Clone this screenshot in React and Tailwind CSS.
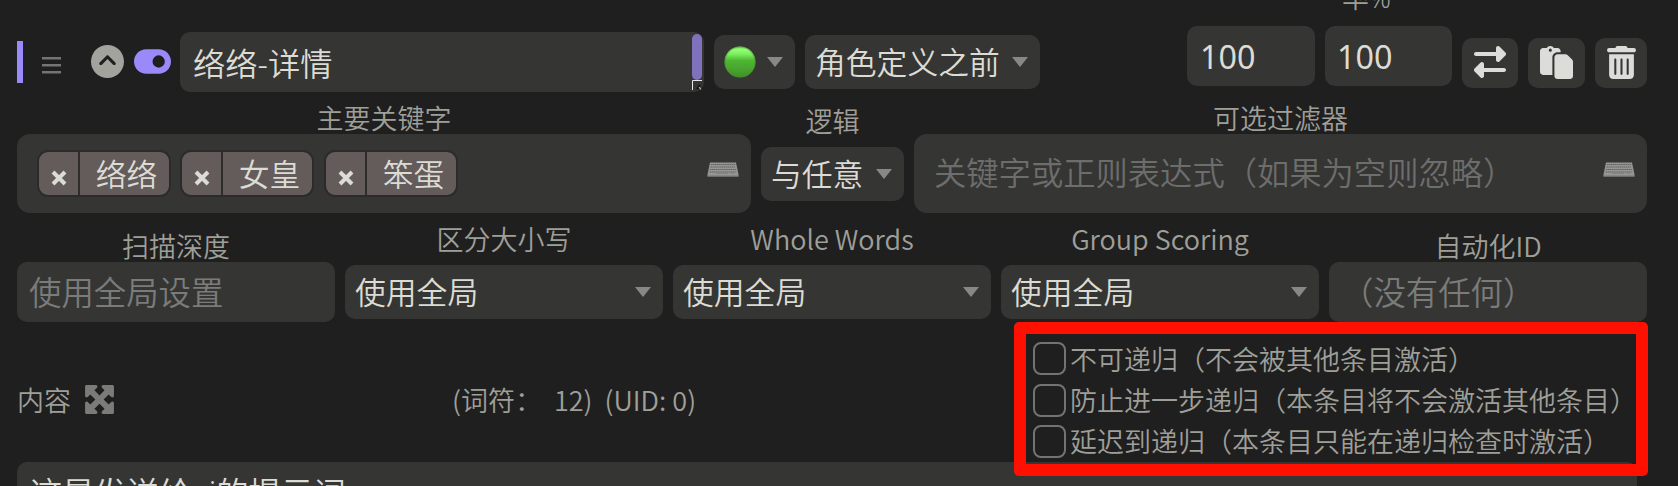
import {
  FaCircleChevronUp,
  FaToggleOn,
  FaRightLeft,
  FaPaste,
  FaTrashCan,
  FaMaximize,
} from "react-icons/fa6";

function Caret() {
  return (
    <svg viewBox="0 0 16 10" className="h-[10px] w-[16px] shrink-0">
      <path d="M0 0H16L8 10Z" fill="#888887" />
    </svg>
  );
}

function Keyboard() {
  return (
    <svg viewBox="0 0 32 15" className="h-[15px] w-[32px] shrink-0">
      <path d="M3 0.5H29L31.5 12.5V14.5H0.5V12.5Z" fill="#969695" />
      <path
        d="M4 2.5H28M3.6 5H28.4M3 7.5H29M2.6 10H29.4"
        stroke="#626261"
        strokeWidth="1.1"
        strokeDasharray="1.4 0.5"
      />
      <path d="M9 11.5H21M24 11.5H27" stroke="#858584" strokeWidth="1" />
      <path d="M0.5 14H31.5" stroke="#777" strokeWidth="1" />
    </svg>
  );
}

function GreenBall() {
  return (
    <svg viewBox="0 0 32 32" className="h-[32px] w-[32px] shrink-0">
      <defs>
        <linearGradient id="ball" x1="0" y1="0" x2="0" y2="1">
          <stop offset="0" stopColor="#6fd755" />
          <stop offset="0.1" stopColor="#93ff78" />
          <stop offset="0.25" stopColor="#7bee5e" />
          <stop offset="0.45" stopColor="#4fb733" />
          <stop offset="0.75" stopColor="#48a22e" />
          <stop offset="1" stopColor="#3f8f28" />
        </linearGradient>
      </defs>
      <circle cx="16" cy="16" r="15.5" fill="url(#ball)" />
      <circle cx="16" cy="16" r="15" fill="none" stroke="#3f8f28" strokeOpacity="0.5" />
    </svg>
  );
}

function Select({ text, className }) {
  return (
    <div
      className={`flex h-[54px] items-center justify-between rounded-[10px] bg-[#353534] pr-[12px] pl-[10px] text-[30.8px] leading-none text-[#dcdcd5] ${className}`}
    >
      <span className="whitespace-nowrap">{text}</span>
      <Caret />
    </div>
  );
}

function Token({ text, className }) {
  return (
    <div
      className={`flex h-[47px] w-[134px] shrink-0 overflow-hidden rounded-[11px] border-2 border-[#2c2b2a] bg-[#645b5b] text-[#dcdcd5] ${className}`}
    >
      <div className="flex w-[41px] items-center justify-center border-r-2 border-[#2f2d2c] pt-[9px]">
        <svg viewBox="0 0 16 16" className="h-[16px] w-[16px]">
          <path d="M2 2L14 14M14 2L2 14" stroke="#dcdcd5" strokeWidth="4" />
        </svg>
      </div>
      <div className="flex flex-1 items-center justify-center pt-[1px] pl-[4px] text-[30.8px] leading-none whitespace-nowrap">
        {text}
      </div>
    </div>
  );
}

function Field({ label, children, low }) {
  return (
    <div className="flex w-[318px] flex-col items-center">
      <div
        className={`flex items-end font-['Noto_Sans_CJK_SC',sans-serif] text-[27px] leading-[32px] whitespace-nowrap text-[#9f9f99] ${low ? "h-[49px]" : "h-[42px]"}`}
      >
        {label}
      </div>
      {children}
    </div>
  );
}

function Check({ text }) {
  return (
    <label className="flex h-[41.4px] items-center gap-[4px]">
      <span className="h-[33px] w-[33px] shrink-0 rounded-[8px] border-2 border-[#737372]" />
      <span className="pt-[2px] text-[27px] leading-[32px] whitespace-nowrap text-[#9f9f99]">{text}</span>
    </label>
  );
}

function HeaderRow() {
  return (
    <div className="flex h-[66px] shrink-0 items-start">
      <div className="mt-[15px] h-[42px] w-[6px] bg-[#9a89f9]" />
      <svg viewBox="0 0 19 17" className="mt-[31px] ml-[19px] h-[17px] w-[19px]">
        <path d="M0 1.2H19M0 8.2H19M0 15.2H19" stroke="#747473" strokeWidth="2.4" />
      </svg>
      <FaCircleChevronUp className="mt-[19px] ml-[30px] h-[33px] w-[33px] text-[#a3a39e]" />
      <FaToggleOn className="mt-[19px] ml-[10px] h-[33px] w-[37px] text-[#9a89f9]" />
      <div className="mt-[6px] ml-[9px] flex h-[60px] w-[524px] items-start justify-between rounded-[10px] bg-[#353534] pr-[2px] pl-[13px]">
        <span className="pt-[9px] text-[32.3px] leading-[44px] text-[#dcdcd5]">络络-详情</span>
        <div className="flex flex-col pt-[2px]">
          <div className="h-[46px] w-[10px] rounded-[5px] bg-[#7f71bc]" />
          <svg viewBox="0 0 10 10" className="h-[10px] w-[10px]">
            <path d="M0.5 10V0.5H10" fill="none" stroke="#e8e8e8" />
            <path d="M5 9L8 5" stroke="#111" strokeWidth="2" />
            <path d="M7 7L9 9.5" stroke="#bbb" strokeWidth="1.2" />
          </svg>
        </div>
      </div>
      <div className="mt-[9px] ml-[10px] flex h-[54px] w-[81px] items-center justify-between rounded-[10px] bg-[#353534] pr-[12px] pl-[10px]">
        <GreenBall />
        <Caret />
      </div>
      <Select text="角色定义之前" className="mt-[9px] ml-[10px] w-[235px]" />
      <div className="ml-[147px] flex h-[60px] w-[128px] items-center rounded-[10px] bg-[#353534] pt-[1px] pl-[13px] text-[32.3px] leading-none font-normal text-[#dcdcd5]">
        100
      </div>
      <div className="ml-[10px] flex h-[60px] w-[127px] items-center rounded-[10px] bg-[#353534] pt-[1px] pl-[12px] text-[32.3px] leading-none font-normal text-[#dcdcd5]">
        100
      </div>
      <div className="mt-[12px] ml-[10px] flex h-[50px] w-[56px] items-start justify-center rounded-[10px] bg-[#353534] pt-[8px]">
        <FaRightLeft className="h-[32px] w-[32px] text-[#dcdcd8]" />
      </div>
      <div className="mt-[12px] ml-[10px] flex h-[50px] w-[57px] items-start justify-center rounded-[10px] bg-[#353534] pt-[8px]">
        <FaPaste className="h-[33px] w-[33px] text-[#dcdcd8]" />
      </div>
      <div className="mt-[12px] ml-[10px] flex h-[50px] w-[52px] items-start justify-center rounded-[10px] bg-[#353534] pt-[8px]">
        <FaTrashCan className="h-[33px] w-[29px] text-[#dcdcd8]" />
      </div>
    </div>
  );
}

function KeywordRow() {
  return (
    <div className="flex h-[121px] shrink-0 gap-[10px]">
      <div className="flex w-[734px] flex-col items-center">
        <div className="flex h-[42px] items-end text-[27px] leading-[31px] text-[#9f9f99]">主要关键字</div>
        <div className="flex h-[79px] w-full items-center rounded-[13px] bg-[#353534] pr-[12px] pl-[20px]">
          <Token text="络络" />
          <Token text="女皇" className="ml-[9px]" />
          <Token text="笨蛋" className="ml-[10px]" />
          <div className="mb-[8px] ml-auto">
            <Keyboard />
          </div>
        </div>
      </div>
      <div className="flex w-[143px] flex-col items-center">
        <div className="flex h-[55px] items-end pb-[10px] text-[27px] leading-[31px] text-[#9f9f99]">逻辑</div>
        <Select text="与任意" className="w-[143px]" />
      </div>
      <div className="flex w-[733px] flex-col items-center">
        <div className="flex h-[42px] items-end text-[27px] leading-[31px] text-[#9f9f99]">可选过滤器</div>
        <div className="flex h-[79px] w-full items-center justify-between rounded-[13px] bg-[#353534] pr-[12px] pl-[20px]">
          <span className="pb-[3px] text-[32.3px] leading-none whitespace-nowrap text-[#6d6d6c]">
            关键字或正则表达式（如果为空则忽略）
          </span>
          <div className="mb-[8px]">
            <Keyboard />
          </div>
        </div>
      </div>
    </div>
  );
}

function SettingsRow() {
  return (
    <div className="flex h-[109px] shrink-0 gap-[10px]">
      <Field label="扫描深度" low>
        <div className="flex h-[60px] w-full items-center rounded-[10px] bg-[#353534] pt-[1px] pl-[12px] text-[32.4px] leading-none text-[#7b7b7a]">
          使用全局设置
        </div>
      </Field>
      <Field label="区分大小写">
        <Select text="使用全局" className="mt-[10px] w-full" />
      </Field>
      <Field label="Whole Words">
        <Select text="使用全局" className="mt-[10px] w-full" />
      </Field>
      <Field label="Group Scoring">
        <Select text="使用全局" className="mt-[10px] w-full" />
      </Field>
      <Field label="自动化ID" low>
        <div className="flex h-[60px] w-full items-center rounded-[10px] bg-[#353534] pt-[1px] pl-[12px] text-[32.4px] leading-none text-[#7b7b7a]">
          （没有任何）
        </div>
      </Field>
    </div>
  );
}

export default function App() {
  return (
    <div className="relative flex h-[486px] w-[1678px] flex-col overflow-hidden bg-[#1f1f1f] pl-[17px] font-['Noto_Sans','Noto_Sans_CJK_SC',sans-serif] font-[350]">
      <div className="flex h-[26px] shrink-0 flex-col justify-end overflow-hidden pb-[12px] pl-[1325px] text-[27px] leading-[32px] text-[#9f9f99]">
        率%
      </div>
      <HeaderRow />
      <KeywordRow />
      <SettingsRow />
      <div className="flex h-[140px] w-[1630px] shrink-0">
        <div className="flex w-[435px] items-start pt-[61px]">
          <span className="pt-[2px] text-[27px] leading-[32px] text-[#9f9f99]">内容</span>
          <FaMaximize className="ml-[12px] h-[33px] w-[33px] text-[#7b7b7a]" />
        </div>
        <div className="pt-[62px] font-['Noto_Sans_CJK_SC',sans-serif] text-[27px] leading-[32px] whitespace-pre text-[#9f9f99]">
          {"(词符：  12)  (UID: 0)"}
        </div>
      </div>
      <div className="h-[60px] w-[1620px] shrink-0 rounded-[10px] bg-[#353534] pt-[8px] pl-[13px] text-[32.3px] leading-[44px] text-[#dcdcd5]">
        这是发送给ai的提示词
      </div>
      <div className="absolute top-[322px] left-[1014px] h-[154px] w-[634px] rounded-[5px] border-[12px] border-[#ff1000] pt-[4px] pl-[7px]">
        <Check text="不可递归（不会被其他条目激活）" />
        <Check text="防止进一步递归（本条目将不会激活其他条目）" />
        <Check text="延迟到递归（本条目只能在递归检查时激活）" />
      </div>
    </div>
  );
}
